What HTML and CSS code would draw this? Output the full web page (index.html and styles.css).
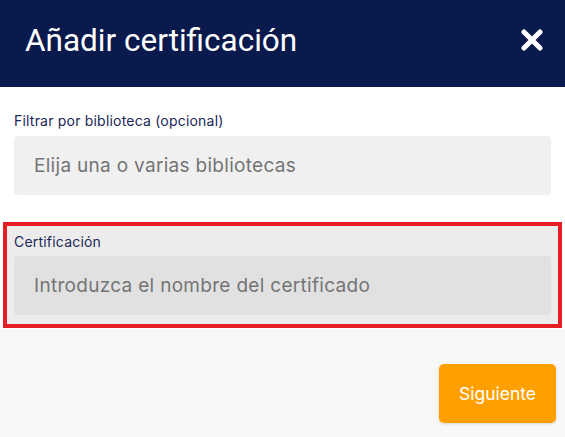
FILE: index.html
```html
<!DOCTYPE html>
<html lang="es">
<head>
    <meta charset="UTF-8">
    <meta name="viewport" content="width=device-width, initial-scale=1.0">
    <title>Añadir certificación</title>
    <link rel="stylesheet" href="styles.css">
</head>
<body>
    <div class="modal">
        <div class="modal-header">
            <h1>Añadir certificación</h1>
            <button class="close" aria-label="Cerrar">
                <svg width="22" height="22" viewBox="0 0 22 22">
                    <path d="M3 3 L19 19 M19 3 L3 19" stroke="#fff" stroke-width="5" stroke-linecap="round"/>
                </svg>
            </button>
        </div>
        <div class="modal-body">
            <div class="field">
                <label for="library">Filtrar por biblioteca (opcional)</label>
                <input type="text" id="library" class="input" placeholder="Elija una o varias bibliotecas">
            </div>
            <div class="field highlighted">
                <label for="cert">Certificación</label>
                <input type="text" id="cert" class="input" placeholder="Introduzca el nombre del certificado">
            </div>
        </div>
        <div class="modal-footer">
            <button class="next">Siguiente</button>
        </div>
    </div>
</body>
</html>
```

FILE: styles.css
```css
body {
    margin: 0;
    font-family: 'Inter', 'Roboto', sans-serif;
    background-color: #f8f8f8;
}
.modal {
    width: 565px;
    height: 437px;
    display: flex;
    flex-direction: column;
}
.modal-header {
    background-color: #0b1a4d;
    height: 87px;
    display: flex;
    align-items: center;
    justify-content: space-between;
    padding: 0 22px 7px 25px;
    box-sizing: border-box;
}
.modal-header h1 {
    margin: 0;
    color: #fff;
    font-family: 'Roboto', sans-serif;
    font-weight: 400;
    font-size: 31.5px;
}
.close {
    background: none;
    border: none;
    padding: 0;
    cursor: pointer;
    display: flex;
}
.modal-body {
    background-color: #fff;
    padding: 25px 3px 1px 3px;
}
.field {
    padding: 0 11px;
    margin-bottom: 27px;
}
.field label {
    display: block;
    font-size: 14px;
    line-height: 17px;
    letter-spacing: 0.2px;
    color: #1b2757;
    margin-bottom: 7px;
}
.input {
    display: block;
    width: 100%;
    box-sizing: border-box;
    height: 59px;
    border: none;
    border-radius: 4px;
    background-color: #f0f0f0;
    padding: 0 20px;
    font-family: inherit;
    font-size: 19px;
    letter-spacing: 0.3px;
    color: #333;
}
.input::placeholder {
    color: #747474;
}
.highlighted {
    border: 4px solid #e41e24;
    background-color: #ececec;
    padding: 7px 7px 9px 7px;
    margin-bottom: 0;
}
.highlighted label {
    margin-bottom: 6px;
}
.highlighted .input {
    background-color: #e1e1e1;
}
.modal-footer {
    flex: 1;
    display: flex;
    justify-content: flex-end;
    align-items: flex-start;
    padding: 35px 9px 0 0;
}
.next {
    background-color: #ffa000;
    color: #fff;
    border: none;
    border-radius: 5px;
    width: 117px;
    height: 59px;
    font-family: inherit;
    font-size: 17.5px;
    cursor: pointer;
    box-shadow: 0 1px 3px rgba(0, 0, 0, 0.15);
}
```
